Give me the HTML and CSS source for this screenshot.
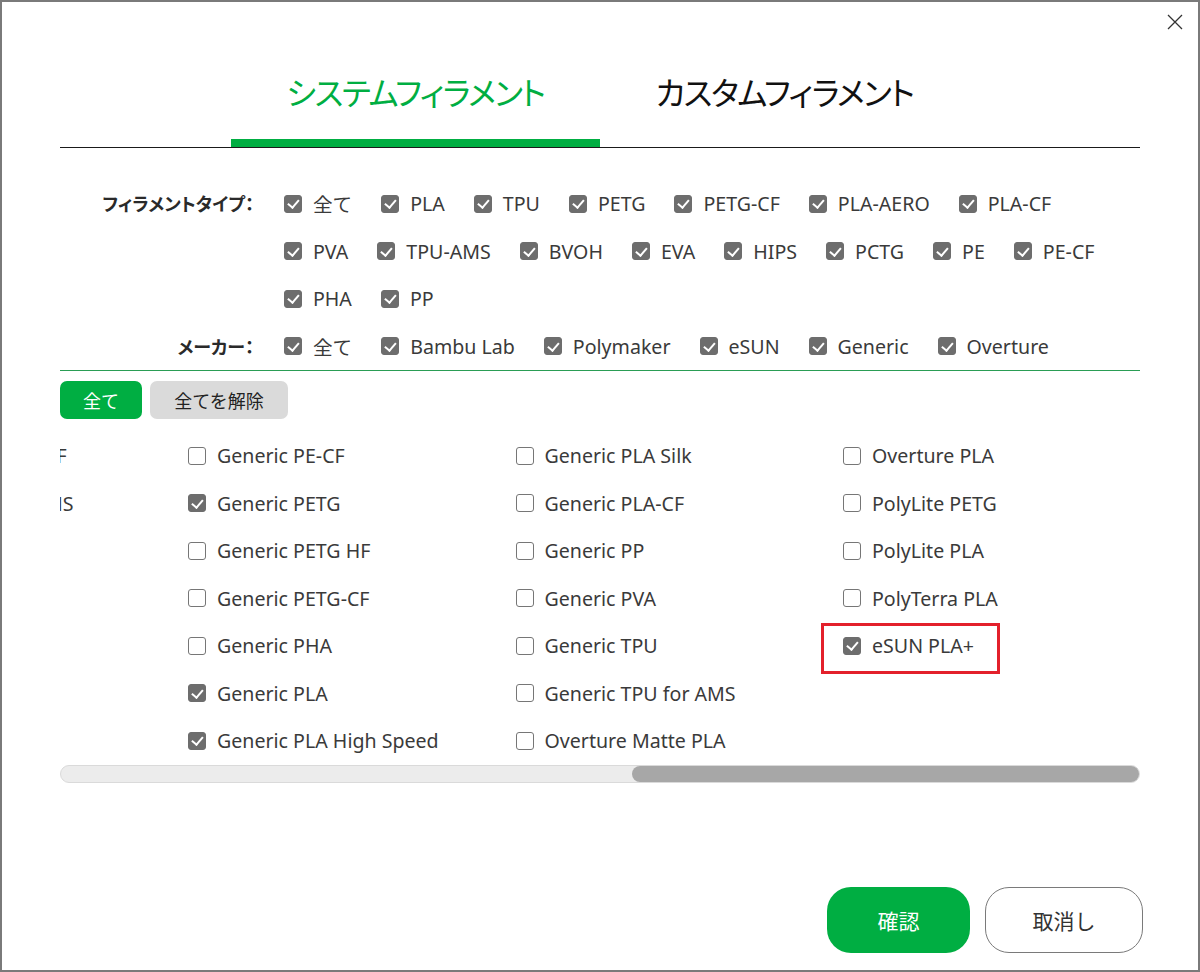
FILE: index.html
```html
<!DOCTYPE html>
<html lang="ja">
<head>
<meta charset="utf-8">
<title>フィラメント選択</title>
<link rel="stylesheet" href="styles.css">
</head>
<body>
<div class="dialog">
  <div class="topbar">
    <button class="close" aria-label="close">
      <svg width="16" height="16" viewBox="0 0 16 16"><path d="M1 1 L15 15 M15 1 L1 15" stroke="#333" stroke-width="1.3" fill="none"/></svg>
    </button>
  </div>

  <div class="tabs">
    <div class="tab active">システムフィラメント</div>
    <div class="tab">カスタムフィラメント</div>
  </div>

  <div class="filters">
    <div class="filter-group">
      <div class="filter-label">フィラメントタイプ：</div>
      <div class="filter-items">
        <label class="item"><span class="cb on"></span>全て</label>
        <label class="item"><span class="cb on"></span>PLA</label>
        <label class="item"><span class="cb on"></span>TPU</label>
        <label class="item"><span class="cb on"></span>PETG</label>
        <label class="item"><span class="cb on"></span>PETG-CF</label>
        <label class="item"><span class="cb on"></span>PLA-AERO</label>
        <label class="item"><span class="cb on"></span>PLA-CF</label>
        <span class="break"></span>
        <label class="item"><span class="cb on"></span>PVA</label>
        <label class="item"><span class="cb on"></span>TPU-AMS</label>
        <label class="item"><span class="cb on"></span>BVOH</label>
        <label class="item"><span class="cb on"></span>EVA</label>
        <label class="item"><span class="cb on"></span>HIPS</label>
        <label class="item"><span class="cb on"></span>PCTG</label>
        <label class="item"><span class="cb on"></span>PE</label>
        <label class="item"><span class="cb on"></span>PE-CF</label>
        <span class="break"></span>
        <label class="item"><span class="cb on"></span>PHA</label>
        <label class="item"><span class="cb on"></span>PP</label>
      </div>
    </div>
    <div class="filter-group">
      <div class="filter-label">メーカー：</div>
      <div class="filter-items">
        <label class="item"><span class="cb on"></span>全て</label>
        <label class="item"><span class="cb on"></span>Bambu Lab</label>
        <label class="item"><span class="cb on"></span>Polymaker</label>
        <label class="item"><span class="cb on"></span>eSUN</label>
        <label class="item"><span class="cb on"></span>Generic</label>
        <label class="item"><span class="cb on"></span>Overture</label>
      </div>
    </div>
  </div>

  <div class="actions">
    <button class="btn-sm primary">全て</button>
    <button class="btn-sm secondary">全てを解除</button>
  </div>

  <div class="list-viewport">
    <div class="list">
      <label class="row"><span class="cb"></span>Bambu PETG-CF</label>
      <label class="row"><span class="cb"></span>Bambu TPU AMS</label>
      <label class="row"><span class="cb"></span>Generic PA</label>
      <label class="row"><span class="cb"></span>Generic PC</label>
      <label class="row"><span class="cb"></span>Generic PCTG</label>
      <label class="row"><span class="cb"></span>Generic PE</label>
      <label class="row"><span class="cb"></span>Generic HIPS</label>

      <label class="row"><span class="cb"></span>Generic PE-CF</label>
      <label class="row"><span class="cb on"></span>Generic PETG</label>
      <label class="row"><span class="cb"></span>Generic PETG HF</label>
      <label class="row"><span class="cb"></span>Generic PETG-CF</label>
      <label class="row"><span class="cb"></span>Generic PHA</label>
      <label class="row"><span class="cb on"></span>Generic PLA</label>
      <label class="row"><span class="cb on"></span>Generic PLA High Speed</label>

      <label class="row"><span class="cb"></span>Generic PLA Silk</label>
      <label class="row"><span class="cb"></span>Generic PLA-CF</label>
      <label class="row"><span class="cb"></span>Generic PP</label>
      <label class="row"><span class="cb"></span>Generic PVA</label>
      <label class="row"><span class="cb"></span>Generic TPU</label>
      <label class="row"><span class="cb"></span>Generic TPU for AMS</label>
      <label class="row"><span class="cb"></span>Overture Matte PLA</label>

      <label class="row"><span class="cb"></span>Overture PLA</label>
      <label class="row"><span class="cb"></span>PolyLite PETG</label>
      <label class="row"><span class="cb"></span>PolyLite PLA</label>
      <label class="row"><span class="cb"></span>PolyTerra PLA</label>
      <label class="row highlight"><span class="cb on"></span>eSUN PLA+</label>
    </div>
  </div>

  <div class="scrollbar"><div class="thumb"></div></div>

  <div class="footer">
    <button class="btn-lg confirm">確認</button>
    <button class="btn-lg cancel">取消し</button>
  </div>
</div>
</body>
</html>
```

FILE: styles.css
```css
* { box-sizing: border-box; }
html, body { margin: 0; padding: 0; background: #fff; }
body {
  font-family: "Noto Sans", "Noto Sans CJK JP", sans-serif;
  color: #3a3a3a;
}
.dialog {
  width: 1200px;
  height: 972px;
  border: 2px solid #7a7a7a;
  display: flex;
  flex-direction: column;
  overflow: hidden;
}
.topbar {
  height: 44px;
  display: flex;
  justify-content: flex-end;
  padding: 12px 15px 0 0;
}
.close {
  border: 0;
  background: none;
  padding: 0;
  width: 16px;
  height: 16px;
  cursor: pointer;
}
.close svg { display: block; }

.tabs {
  margin: 0 58px;
  display: flex;
  justify-content: center;
  border-bottom: 1px solid #1a1a1a;
}
.tab {
  width: 369px;
  text-align: center;
  font-family: "Noto Sans CJK JP", sans-serif;
  font-size: 32px;
  line-height: 41px;
  letter-spacing: -1.5px;
  padding: 25px 0 27px;
  border-bottom: 8px solid transparent;
  color: #111;
  font-feature-settings: "palt";
}
.tab.active {
  color: #00ae42;
  border-bottom-color: #00ae42;
}

.filters {
  margin: 0 58px;
  padding-top: 32px;
  border-bottom: 1px solid #2a9d55;
}
.filter-group { display: flex; }
.filter-label {
  width: 194px;
  margin-right: 30px;
  flex: none;
  text-align: right;
  height: 47.5px;
  line-height: 47.5px;
  font-family: "Noto Sans CJK JP", sans-serif;
  font-size: 18px;
  font-weight: 700;
  color: #2a2a2a;
  font-feature-settings: "palt";
}
.filter-items {
  flex: 1;
  display: flex;
  flex-wrap: wrap;
  column-gap: 29px;
}
.break { flex-basis: 100%; height: 0; }
.item {
  height: 47.5px;
  display: flex;
  align-items: center;
  gap: 11px;
  font-size: 19.6px;
  white-space: nowrap;
}

.cb {
  width: 18px;
  height: 18px;
  flex: none;
  border-radius: 3px;
  border: 1.5px solid #767676;
  background: #fff;
  position: relative;
}
.cb.on {
  background: #6d6d6d;
  border-color: #6d6d6d;
}
.cb.on::after {
  content: "";
  position: absolute;
  left: 5px;
  top: 1.5px;
  width: 4.5px;
  height: 9px;
  border: solid #fff;
  border-width: 0 2.5px 2.5px 0;
  transform: rotate(40deg);
}

.actions {
  margin: 10px 58px 0;
  display: flex;
  gap: 8px;
}
.btn-sm {
  height: 38px;
  border: 0;
  border-radius: 7px;
  font-family: "Noto Sans CJK JP", sans-serif;
  font-size: 18px;
  padding: 0;
}
.btn-sm.primary { width: 82px; background: #00ae42; color: #fff; }
.btn-sm.secondary { width: 138px; background: #dadada; color: #222; }

.list-viewport {
  margin: 13px 58px 0;
  overflow: hidden;
}
.list {
  display: grid;
  grid-auto-flow: column;
  grid-template-rows: repeat(7, 47.5px);
  grid-template-columns: 298px repeat(3, 327.5px);
  margin-left: -170px;
  width: max-content;
}
.row {
  display: flex;
  align-items: center;
  gap: 11px;
  font-size: 19.6px;
  white-space: nowrap;
  position: relative;
  justify-self: start;
}
.row.highlight::after {
  content: "";
  position: absolute;
  left: -22px;
  right: -26px;
  top: 1px;
  bottom: -4px;
  border: 3px solid #e3202b;
}

.scrollbar {
  margin: 0 58px;
  height: 18px;
  border-radius: 9px;
  background: #ececec;
  border: 1px solid #dadada;
  display: flex;
  justify-content: flex-end;
}
.thumb {
  width: 507px;
  height: 100%;
  border-radius: 8px;
  background: #a7a7a7;
}

.footer {
  margin-top: auto;
  display: flex;
  justify-content: flex-end;
  gap: 15px;
  padding: 0 55px 17px 0;
}
.btn-lg {
  height: 66px;
  border-radius: 24px;
  font-family: "Noto Sans CJK JP", sans-serif;
  font-size: 21px;
  padding: 0;
}
.btn-lg.confirm { width: 143px; background: #00ae42; color: #fff; border: 0; }
.btn-lg.cancel { width: 158px; background: #fff; color: #333; border: 1px solid #7a7a7a; }
```
